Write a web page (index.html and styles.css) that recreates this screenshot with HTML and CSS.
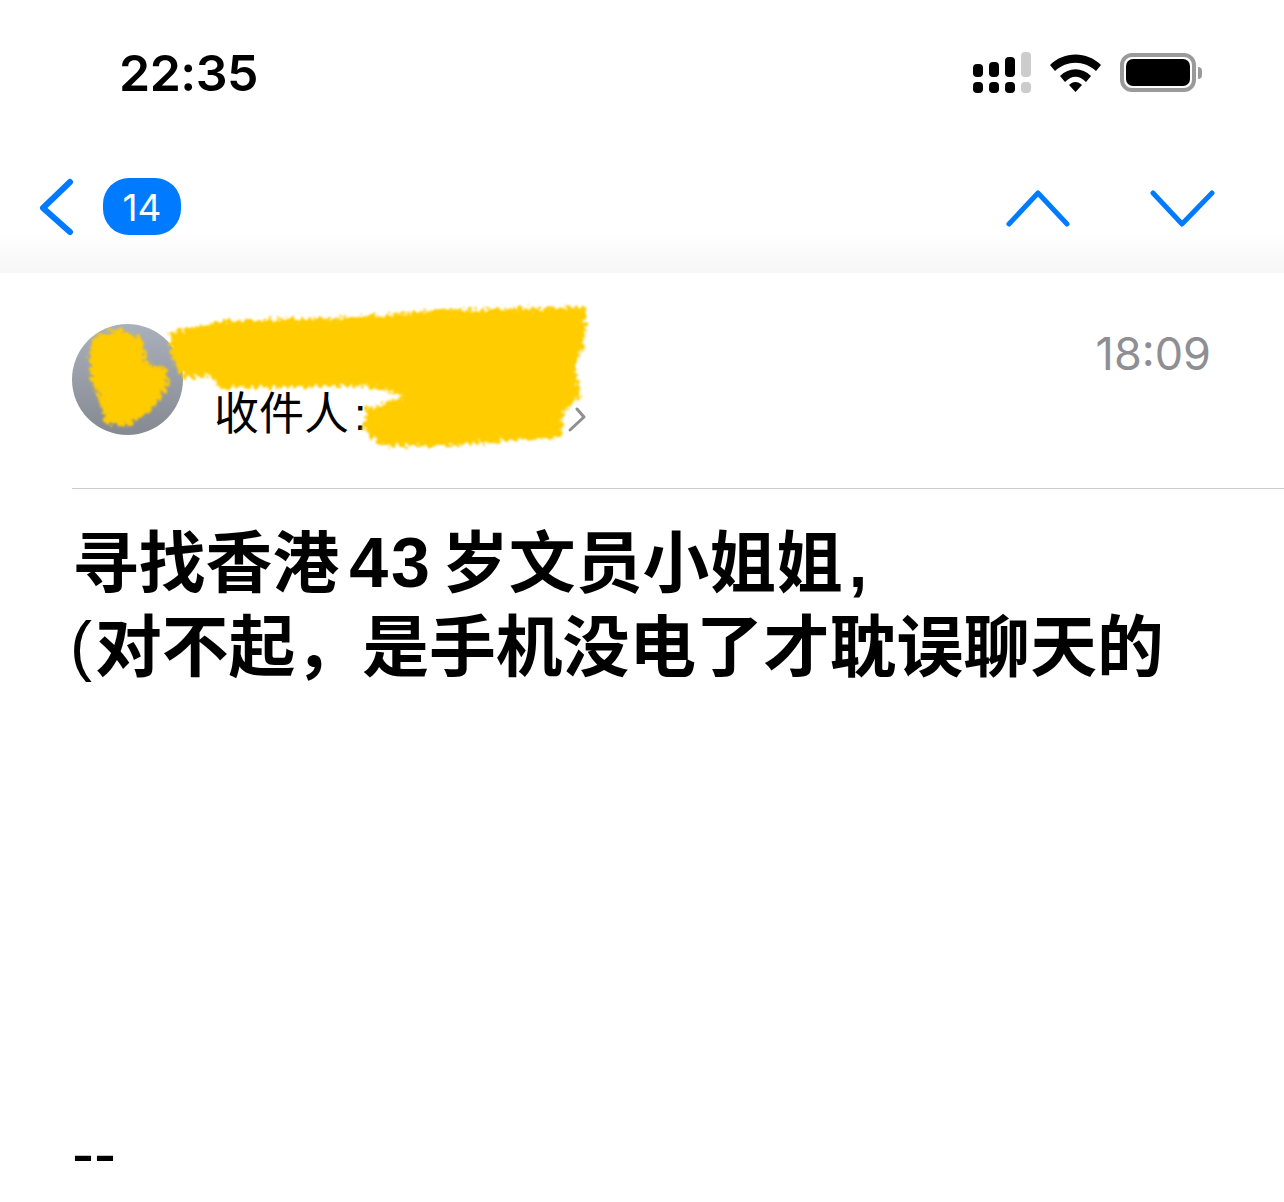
FILE: index.html
```html
<!DOCTYPE html>
<html lang="zh-CN">
<head>
    <meta charset="UTF-8">
    <meta name="viewport" content="width=device-width, initial-scale=1.0">
    <title>Mail</title>
    <link rel="stylesheet" href="styles.css">
</head>
<body>
    <div class="page">
        <div class="top-area">
            <div class="status-bar">
                <div class="clock">22:35</div>
                <div class="status-icons">
                    <svg class="signal" width="58" height="41" viewBox="0 0 58 41">
                        <rect x="0" y="12" width="10" height="13" rx="4" fill="#000"/>
                        <rect x="16" y="10" width="10" height="15" rx="4" fill="#000"/>
                        <rect x="32" y="5" width="10" height="20" rx="4" fill="#000"/>
                        <rect x="48" y="0" width="10" height="25" rx="4" fill="#ccc"/>
                        <rect x="0" y="30" width="10" height="11" rx="4" fill="#000"/>
                        <rect x="16" y="30" width="10" height="11" rx="4" fill="#000"/>
                        <rect x="32" y="30" width="10" height="11" rx="4" fill="#000"/>
                        <rect x="48" y="30" width="10" height="11" rx="4" fill="#ccc"/>
                    </svg>
                    <svg class="wifi" width="51" height="38" viewBox="0 0 51 38">
                        <path d="M0 11 C14 -3 37 -3 51 11 L46 17 C34 6 17 6 5 17 Z" fill="#000"/>
                        <path d="M10 22 C19 13 32 13 41 22 L36 28 C29 21 22 21 15 28 Z" fill="#000"/>
                        <path d="M19 31 C23 27 28 27 32 31 L25.5 38 Z" fill="#000"/>
                    </svg>
                    <div class="battery">
                        <div class="battery-body"><div class="battery-level"></div></div>
                        <div class="battery-nub"></div>
                    </div>
                </div>
            </div>
            <div class="nav-bar">
                <div class="nav-left">
                    <svg class="chevron" width="36" height="60" viewBox="0 0 36 60">
                        <path d="M31 4 L4 30 L31 54" fill="none" stroke="#007aff" stroke-width="6" stroke-linecap="round" stroke-linejoin="round"/>
                    </svg>
                    <div class="badge">14</div>
                </div>
                <div class="nav-right">
                    <svg class="chevron" width="66" height="38" viewBox="0 0 66 38">
                        <path d="M3 34 L32 3 L61 34" fill="none" stroke="#007aff" stroke-width="5" stroke-linecap="round" stroke-linejoin="round"/>
                    </svg>
                    <svg class="chevron" width="66" height="38" viewBox="0 0 66 38">
                        <path d="M3 3 L32 34 L62 3" fill="none" stroke="#007aff" stroke-width="5" stroke-linecap="round" stroke-linejoin="round"/>
                    </svg>
                </div>
            </div>
        </div>

        <div class="mail-header">
            <div class="avatar"></div>
            <div class="people">
                <div class="sender">&nbsp;</div>
                <div class="recipient">收件人<span class="colon">:</span></div>
            </div>
            <div class="sent-time">18:09</div>
        </div>

        <div class="mail-body">
            <h1 class="subject">寻找香港<span class="num">43</span>岁文员小姐姐<span class="comma">,</span><br><span class="paren">(</span>对不起，是手机没电了才耽误聊天的</h1>
            <div class="signature">--</div>
        </div>

        <!-- yellow marker that hides the names -->
        <svg class="scribble" width="1284" height="1202" viewBox="0 0 1284 1202">
            <defs>
                <filter id="rough" x="-5%" y="-10%" width="110%" height="120%">
                    <feTurbulence type="fractalNoise" baseFrequency="0.22" numOctaves="3" seed="4"/>
                    <feDisplacementMap in="SourceGraphic" scale="13" xChannelSelector="R" yChannelSelector="G"/>
                    <feGaussianBlur stdDeviation="0.8"/>
                </filter>
            </defs>
            <g fill="#ffcc02" filter="url(#rough)">
                <path d="M119 328 L143 340 L147 364 L164 367 L169 385 L150 412 L125 427 L105 423 L98 395 L91 381 L89 354 L96 336 Z"/>
                <path d="M170 333 L219 321 L336 318 L439 310 L586 307 L585 340 L575 367 L581 398 L563 412 L561 437 L439 446 L382 446 L362 428 L367 409 L405 396 L370 386 L219 388 L212 376 L184 378 L170 357 Z"/>
            </g>
            <path d="M577 409 L584 417 L570 430" fill="none" stroke="#8e8e93" stroke-width="3" stroke-linecap="round" stroke-linejoin="round"/>
        </svg>
    </div>
</body>
</html>
```

FILE: styles.css
```css
* {
    box-sizing: border-box;
}
body {
    margin: 0;
    padding: 0;
    overflow: hidden;
    background-color: #fff;
    color: #000;
    font-family: "Liberation Sans", "Noto Sans CJK SC", sans-serif;
}
.page {
    position: relative;
    width: 1284px;
    height: 1202px;
    overflow: hidden;
}
.top-area {
    height: 273px;
    background: linear-gradient(to bottom, #fff 0, #fff 232px, #f6f6f6 273px);
}
.status-bar {
    height: 146px;
    padding: 42px 82px 0 119px;
    display: flex;
    justify-content: space-between;
    align-items: flex-start;
}
.clock {
    font-family: Inter, sans-serif;
    font-size: 50px;
    font-weight: 600;
    letter-spacing: -0.5px;
    line-height: 62px;
}
.status-icons {
    display: flex;
    align-items: center;
    gap: 19px;
    padding-top: 10px;
}
.battery {
    display: flex;
    align-items: center;
    gap: 2px;
}
.battery-body {
    width: 76px;
    height: 39px;
    padding: 2px;
    border: 4px solid #9a9a9a;
    border-radius: 12px;
}
.battery-level {
    width: 100%;
    height: 100%;
    background-color: #000;
    border-radius: 7px;
}
.battery-nub {
    width: 4px;
    height: 12px;
    background-color: #9a9a9a;
    border-radius: 0 4px 4px 0;
}
.nav-bar {
    display: flex;
    justify-content: space-between;
    align-items: flex-start;
    padding: 32px 68px 0 39px;
}
.nav-left {
    display: flex;
    align-items: flex-start;
    gap: 28px;
}
.nav-right {
    display: flex;
    gap: 78px;
    padding-top: 12px;
}
.chevron {
    display: block;
}
.badge {
    width: 78px;
    height: 57px;
    background-color: #007aff;
    border-radius: 26px;
    color: #fff;
    font-family: Inter, sans-serif;
    font-size: 37px;
    line-height: 59px;
    text-align: center;
}
.mail-header {
    display: flex;
    align-items: flex-start;
    height: 216px;
    margin-left: 72px;
    padding: 51px 73px 0 0;
    border-bottom: 1px solid #ccc;
}
.avatar {
    width: 111px;
    height: 111px;
    border-radius: 50%;
    background: linear-gradient(to bottom, #aab0bc, #858991);
}
.people {
    flex: 1;
    padding-left: 31px;
}
.sender {
    height: 63px;
}
.recipient {
    font-size: 45px;
    line-height: 56px;
}
.colon {
    margin-left: 5px;
}
.sent-time {
    padding-top: 2px;
    font-family: Inter, sans-serif;
    font-size: 45px;
    line-height: 56px;
    color: #8e8e93;
}
.mail-body {
    padding: 33px 0 0 72px;
}
.subject {
    margin: 0;
    font-size: 66.8px;
    font-weight: 700;
    line-height: 84px;
}
.num {
    margin: 0 9px 0 10px;
    font-size: 70px;
    line-height: 1;
    letter-spacing: 3px;
}
.comma {
    margin-left: 6px;
}
.paren {
    margin: 0 3px 0 -2px;
    font-size: 66px;
    font-weight: 400;
    line-height: 1;
    vertical-align: 3px;
}
.signature {
    margin-top: 430px;
    font-size: 66px;
    line-height: 66px;
}
.scribble {
    position: absolute;
    top: 0;
    left: 0;
}
```
